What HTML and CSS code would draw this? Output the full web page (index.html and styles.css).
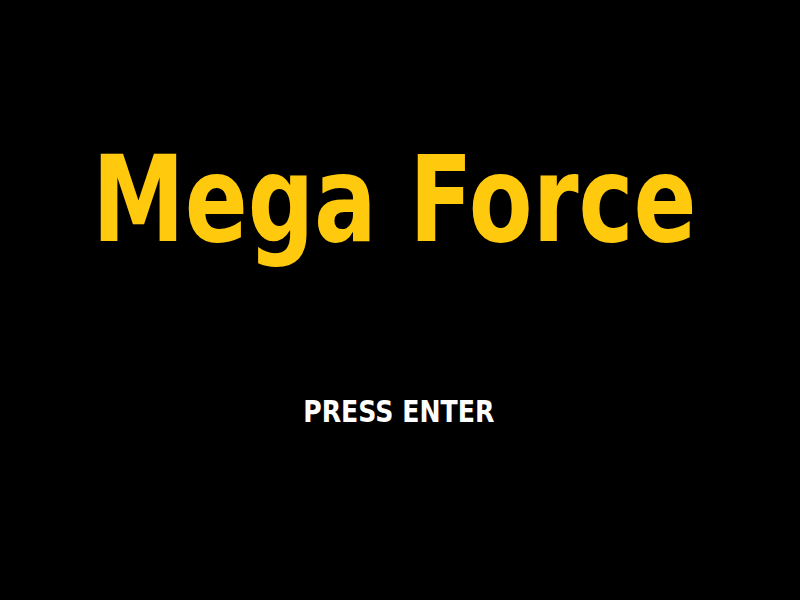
FILE: index.html
```html
<!DOCTYPE html>
<html>
<head>
<meta charset="utf-8">
<link rel="stylesheet" href="styles.css">
</head>
<body>
<main class="screen">
  <h1 class="title">Mega Force</h1>
  <p class="prompt">PRESS ENTER</p>
</main>
</body>
</html>
```
FILE: styles.css
```css
html, body {
  margin: 0;
  padding: 0;
  background: #000;
}
.screen {
  width: 800px;
  height: 600px;
  box-sizing: border-box;
  padding-top: 140px;
  display: flex;
  flex-direction: column;
  align-items: center;
  font-family: "DejaVu Sans", sans-serif;
  font-weight: bold;
}
.title {
  margin: 0 12px 0 0;
  font-size: 120px;
  line-height: 120px;
  color: #ffc90e;
  font-weight: bold;
  transform: scaleX(0.774);
}
.prompt {
  margin: 137px 3px 0 0;
  font-size: 30px;
  line-height: 30px;
  color: #fff;
  transform: scaleX(0.84);
}
```
